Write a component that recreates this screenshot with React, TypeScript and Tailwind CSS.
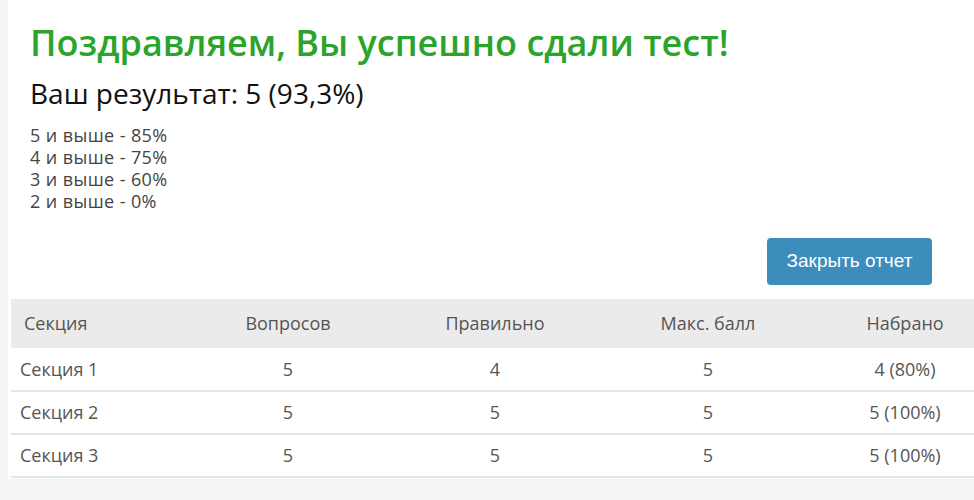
import React from 'react';

const rows = [
  { name: 'Секция 1', total: 5, correct: 4, max: 5, score: '4 (80%)' },
  { name: 'Секция 2', total: 5, correct: 5, max: 5, score: '5 (100%)' },
  { name: 'Секция 3', total: 5, correct: 5, max: 5, score: '5 (100%)' },
];

const grades = ['5 и выше - 85%', '4 и выше - 75%', '3 и выше - 60%', '2 и выше - 0%'];

const App: React.FC = () => {
  return (
    <div className="h-[500px] w-full overflow-hidden bg-[#f5f5f5] pl-2">
      <div className="bg-white w-[990px] pb-px">
        <div className="pl-[22px] pr-[66px] pt-[20px]">
          <h1 className="text-[36px] leading-[46px] font-semibold text-[#2ca42c] font-['Open_Sans',sans-serif]">
            Поздравляем, Вы успешно сдали тест!
          </h1>
          <p className="mt-[10px] text-[28px] leading-[34px] text-[#111] font-['Open_Sans',sans-serif]">
            Ваш результат: 5 (93,3%)
          </p>
          <div className="mt-[14px] text-[18px] leading-[22px] tracking-[0.4px] text-[#444] font-['Open_Sans',sans-serif]">
            {grades.map(g => (
              <div key={g}>{g}</div>
            ))}
          </div>
          <div className="flex justify-end mt-[26px]">
            <button
              type="button"
              className="w-[165px] h-[47px] rounded-[4px] bg-[#3c8dbc] text-white text-[19px] font-['Liberation_Sans',Arial,sans-serif]"
            >
              Закрыть отчет
            </button>
          </div>
        </div>
        <div className="pl-[3px] mt-[14px]">
          <table className="table-fixed w-[982px] border-collapse text-[18px] text-[#555] font-['Open_Sans',sans-serif]">
            <colgroup>
              <col className="w-[174px]" />
              <col className="w-[206px]" />
              <col className="w-[208px]" />
              <col className="w-[218px]" />
              <col className="w-[176px]" />
            </colgroup>
            <thead>
              <tr className="bg-[#ebebeb] h-[49px]">
                <th className="text-left font-normal pl-[13px]">Секция</th>
                <th className="font-normal">Вопросов</th>
                <th className="font-normal">Правильно</th>
                <th className="font-normal">Макс. балл</th>
                <th className="font-normal">Набрано</th>
              </tr>
            </thead>
            <tbody>
              {rows.map(r => (
                <tr key={r.name} className="h-[43px] border-b-2 border-[#dde7e7]">
                  <td className="text-left pl-[9px]">{r.name}</td>
                  <td className="text-center">{r.total}</td>
                  <td className="text-center">{r.correct}</td>
                  <td className="text-center">{r.max}</td>
                  <td className="text-center">{r.score}</td>
                </tr>
              ))}
            </tbody>
          </table>
        </div>
      </div>
    </div>
  );
};

export default App;
